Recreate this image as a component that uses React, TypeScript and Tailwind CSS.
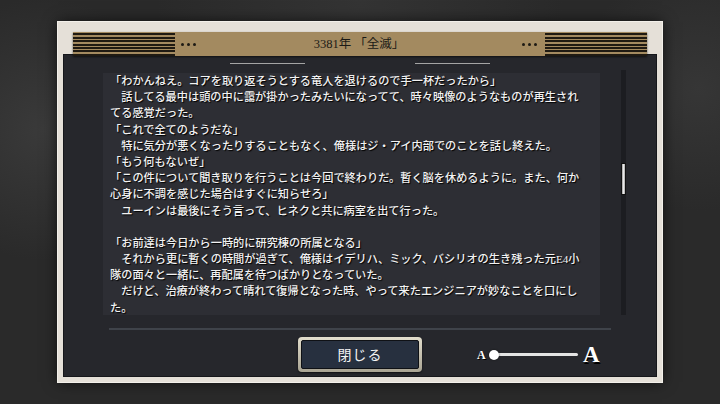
const storyLines = [
  "「わかんねえ。コアを取り返そうとする竜人を退けるので手一杯だったから」",
  "　話してる最中は頭の中に靄が掛かったみたいになってて、時々映像のようなものが再生され",
  "てる感覚だった。",
  "「これで全てのようだな」",
  "　特に気分が悪くなったりすることもなく、俺様はジ・アイ内部でのことを話し終えた。",
  "「もう何もないぜ」",
  "「この件について聞き取りを行うことは今回で終わりだ。暫く脳を休めるように。また、何か",
  "心身に不調を感じた場合はすぐに知らせろ」",
  "　ユーインは最後にそう言って、ヒネクと共に病室を出て行った。",
  "",
  "「お前達は今日から一時的に研究棟の所属となる」",
  "　それから更に暫くの時間が過ぎて、俺様はイデリハ、ミック、バシリオの生き残った元E4小",
  "隊の面々と一緒に、再配属を待つばかりとなっていた。",
  "　だけど、治療が終わって晴れて復帰となった時、やって来たエンジニアが妙なことを口にし",
  "た。",
];

function Dots() {
  return (
    <div className="flex items-center gap-[3px]">
      <span className="size-[3px] rounded-full bg-[#1d1a14]" />
      <span className="size-[3px] rounded-full bg-[#1d1a14]" />
      <span className="size-[3px] rounded-full bg-[#1d1a14]" />
    </div>
  );
}

function TitleBar() {
  return (
    <div className="relative z-10 mx-[10px] flex h-[24px] shrink-0 items-center bg-[#a38a60] shadow-[0_1px_2px_rgba(0,0,0,.6)]">
      <div className="h-full w-[102px] bg-[repeating-linear-gradient(to_bottom,#a38a60_0px,#a38a60_1.4px,#1f1a12_1.4px,#1f1a12_3.4px)]" />
      <div className="ml-[6px]">
        <Dots />
      </div>
      <div className="flex-1 text-center font-['Liberation_Serif','Noto_Sans_CJK_JP',serif] text-[12.5px] leading-none text-[#1b1a16]">
        3381年 「全滅」
      </div>
      <div className="mr-[8px]">
        <Dots />
      </div>
      <div className="h-full w-[102px] bg-[repeating-linear-gradient(to_bottom,#a38a60_0px,#a38a60_1.4px,#1f1a12_1.4px,#1f1a12_3.4px)]" />
    </div>
  );
}

function FontSizeSlider() {
  return (
    <div className="ml-[55px] flex items-center font-['Liberation_Serif',serif] font-bold text-white [text-shadow:1px_1px_0_#000]">
      <span className="w-[8px] text-[12px] leading-none">A</span>
      <div className="relative ml-[4px] flex h-[10px] w-[89px] items-center">
        <div className="ml-[5px] h-[3px] w-[84px] rounded-full bg-[#e4e4e4]" />
        <div className="absolute left-0 top-0 size-[10px] rounded-full bg-white shadow-[0_0_2px_rgba(0,0,0,.6)]" />
      </div>
      <span className="ml-[5px] text-[23px] leading-none [text-shadow:1px_2px_0_#000]">A</span>
    </div>
  );
}

export default function App() {
  return (
    <div className="flex h-[404px] w-[720px] items-center justify-center overflow-hidden bg-[#2a2a2a] bg-[radial-gradient(circle_at_6%_32%,#3a3a3a_0%,transparent_18%),radial-gradient(circle_at_97%_22%,#363636_0%,transparent_16%),radial-gradient(ellipse_at_50%_0%,#343434_0%,transparent_40%)]">
      <div className="flex h-[360px] w-[604px] flex-col bg-[#e5e0d8] px-[5px] pb-[5px] pt-[10px] shadow-[0_0_14px_rgba(0,0,0,.7)] ring-1 ring-[#f3f0ea]">
        <TitleBar />

        <div className="-mt-[2px] flex flex-1 flex-col border border-[#16171b] bg-[#26272c]">
          <div className="mt-[8px] flex justify-center gap-[110px]">
            <div className="h-px w-[75px] bg-[#a4a4a4]" />
            <div className="h-px w-[75px] bg-[#a4a4a4]" />
          </div>

          <div className="ml-[39px] mt-[6px] flex h-[245px]">
            <div className="mt-[3px] h-[242px] w-[497px] overflow-hidden bg-[#2d2e34] pl-[7px] font-['Liberation_Serif','Noto_Sans_CJK_JP',serif] text-[11.2px] font-medium leading-[16.2px] text-[#f2f2f2] [text-shadow:1px_1px_1px_#000]">
              {storyLines.map((line, i) => (
                <div key={i} className="h-[16.2px] whitespace-pre">
                  {line}
                </div>
              ))}
            </div>
            <div className="ml-[21px] h-full w-[5px] bg-[#1c1d21]">
              <div className="mt-[93px] h-[32px] w-full border border-[#111] bg-[linear-gradient(to_right,#9e9e9e,#e8e8e8_50%,#a8a8a8)]" />
            </div>
          </div>

          <div className="ml-[45px] mt-[13px] h-[2px] w-[502px] bg-[#3f434a]" />

          <div className="ml-[234px] mt-[7px] flex items-center">
            <button
              type="button"
              className="h-[35px] w-[124px] rounded-[4px] bg-[linear-gradient(to_bottom,#e2ddcc,#a9a493)] p-[3px] shadow-[0_1px_2px_rgba(0,0,0,.6)]"
            >
              <span className="flex h-full w-full items-center justify-center rounded-[2px] border border-[#0f1115] bg-[#27303f] font-['Noto_Sans_CJK_JP',sans-serif] text-[14px] tracking-[1px] text-[#f4f4f4]">
                閉じる
              </span>
            </button>
            <FontSizeSlider />
          </div>
        </div>
      </div>
    </div>
  );
}
